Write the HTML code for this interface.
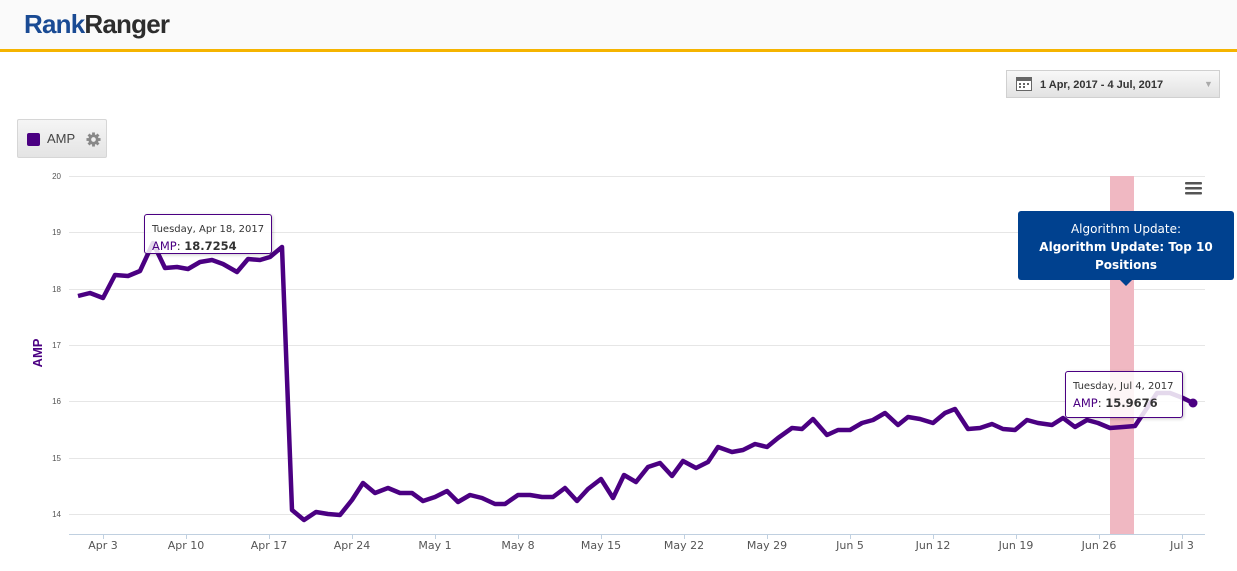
<!DOCTYPE html>
<html><head><meta charset="utf-8"><style>
body{margin:0;width:1237px;height:571px;overflow:hidden;background:#fff;font-family:"Liberation Sans",sans-serif;position:relative}
.hdr{position:absolute;left:0;top:0;width:1237px;height:49px;background:#fafafa;border-bottom:3px solid #f5b400}
.logo{position:absolute;left:24px;top:9px;font-size:26px;font-weight:bold;letter-spacing:-0.8px}
.date{position:absolute;left:1006px;top:70px;width:214px;height:28px;background:linear-gradient(#f8f8f8,#e2e2e2);border:1px solid #d0d0d0;box-sizing:border-box;font-size:11px;font-weight:bold;color:#333}
.amp{position:absolute;left:17px;top:119px;width:90px;height:39px;background:linear-gradient(#f5f5f5,#e4e4e4);border:1px solid #d6d6d6;box-sizing:border-box;border-radius:2px;font-size:13px;color:#444}
.tt{position:absolute;background:#fff;border:1px solid #4b0082;border-radius:3px;box-sizing:border-box;font-family:"DejaVu Sans",sans-serif;color:#333;box-shadow:1px 1px 3px rgba(0,0,0,.2)}
</style></head><body>
<div class="hdr"><div class="logo"><span style="color:#1a4b94">Rank</span><span style="color:#2d2d2d">Ranger</span></div></div>
<div class="date">
<svg style="position:absolute;left:9px;top:6px" width="16" height="14"><rect x="0.5" y="0.5" width="15" height="13" fill="#fff" stroke="#666"/><rect x="0" y="0" width="16" height="4" fill="#666"/><g fill="#666"><rect x="3" y="6" width="2" height="2"/><rect x="7" y="6" width="2" height="2"/><rect x="11" y="6" width="2" height="2"/><rect x="3" y="9" width="2" height="2"/><rect x="7" y="9" width="2" height="2"/></g></svg>
<span style="position:absolute;left:33px;top:8px">1 Apr, 2017 - 4 Jul, 2017</span>
<span style="position:absolute;left:197px;top:8px;color:#aaa;font-size:9px">▼</span></div>
<div class="amp"><div style="position:absolute;left:9px;top:13px;width:13px;height:13px;background:#4b0082;border-radius:2px"></div>
<span style="position:absolute;left:29px;top:11px">AMP</span>
<svg style="position:absolute;left:68px;top:12px" width="15" height="15" viewBox="0 0 16 16"><g fill="#888"><circle cx="8" cy="8" r="5.5"/><g stroke="#888" stroke-width="3"><line x1="8" y1="0.5" x2="8" y2="15.5"/><line x1="0.5" y1="8" x2="15.5" y2="8"/><line x1="2.7" y1="2.7" x2="13.3" y2="13.3"/><line x1="13.3" y1="2.7" x2="2.7" y2="13.3"/></g></g><circle cx="8" cy="8" r="2.5" fill="#eee"/></svg></div>

<svg style="position:absolute;left:0;top:0" width="1237" height="571">
<g stroke="#e6e6e6" stroke-width="1">
<line x1="69" y1="176.5" x2="1205" y2="176.5"/><line x1="69" y1="232.5" x2="1205" y2="232.5"/><line x1="69" y1="289.5" x2="1205" y2="289.5"/><line x1="69" y1="345.5" x2="1205" y2="345.5"/><line x1="69" y1="401.5" x2="1205" y2="401.5"/><line x1="69" y1="458.5" x2="1205" y2="458.5"/><line x1="69" y1="514.5" x2="1205" y2="514.5"/></g>
<rect x="1110" y="176" width="24" height="358" fill="#f0b8c2"/>
<line x1="69" y1="534.5" x2="1205" y2="534.5" stroke="#c0d0e0"/>
<g stroke="#c0d0e0"><line x1="103.5" y1="534" x2="103.5" y2="539"/><line x1="186.5" y1="534" x2="186.5" y2="539"/><line x1="269.5" y1="534" x2="269.5" y2="539"/><line x1="352.5" y1="534" x2="352.5" y2="539"/><line x1="435.5" y1="534" x2="435.5" y2="539"/><line x1="518.5" y1="534" x2="518.5" y2="539"/><line x1="601.5" y1="534" x2="601.5" y2="539"/><line x1="684.5" y1="534" x2="684.5" y2="539"/><line x1="767.5" y1="534" x2="767.5" y2="539"/><line x1="850.5" y1="534" x2="850.5" y2="539"/><line x1="933.5" y1="534" x2="933.5" y2="539"/><line x1="1016.5" y1="534" x2="1016.5" y2="539"/><line x1="1099.5" y1="534" x2="1099.5" y2="539"/><line x1="1182.5" y1="534" x2="1182.5" y2="539"/></g>
<g font-family="Liberation Sans" font-size="8" fill="#555" text-anchor="end">
<text x="61" y="179">20</text><text x="61" y="235">19</text><text x="61" y="292">18</text><text x="61" y="348">17</text><text x="61" y="404">16</text><text x="61" y="461">15</text><text x="61" y="517">14</text></g>
<g font-family="DejaVu Sans" font-size="11" fill="#555" text-anchor="middle">
<text x="103" y="549">Apr 3</text><text x="186" y="549">Apr 10</text><text x="269" y="549">Apr 17</text><text x="352" y="549">Apr 24</text><text x="435" y="549">May 1</text><text x="518" y="549">May 8</text><text x="601" y="549">May 15</text><text x="684" y="549">May 22</text><text x="767" y="549">May 29</text><text x="850" y="549">Jun 5</text><text x="933" y="549">Jun 12</text><text x="1016" y="549">Jun 19</text><text x="1099" y="549">Jun 26</text><text x="1182" y="549">Jul 3</text></g>
<text transform="translate(42,353) rotate(-90)" text-anchor="middle" font-family="Liberation Sans" font-size="13" font-weight="bold" fill="#4b0082">AMP</text>
<polyline fill="none" stroke="#4b0082" stroke-width="4.5" stroke-linejoin="round" points="78,296 90,293 103,298 115,275 128,276 140,271 153,243 165,268 177,267 188,269 200,262 212,260 223,264 237,272 248,259 260,260 270,257 282,247 292,510 304,520 316,512 328,514 340,515 352,500 363,483 375,493 388,488 400,493 412,493 423,501 435,497 447,491 458,502 470,495 482,498 495,504 505,504 518,495 530,495 542,497 553,497 565,488 577,501 588,489 601,479 613,498 624,475 636,482 648,467 660,463 672,476 683,461 696,468 708,462 718,447 732,452 743,450 755,444 767,447 778,438 792,428 802,429 813,419 827,435 838,430 850,430 862,423 873,420 885,413 898,425 908,417 920,419 933,423 945,413 955,409 968,429 980,428 992,424 1003,429 1015,430 1027,420 1038,423 1052,425 1063,418 1075,427 1087,420 1098,423 1110,428 1123,427 1135,426 1157,393 1170,393 1183,398 1193,403"/>
<circle cx="1193" cy="403" r="4.5" fill="#4b0082"/>
<g fill="#555"><rect x="1185" y="182" width="17" height="2.5" rx="1"/><rect x="1185" y="187" width="17" height="2.5" rx="1"/><rect x="1185" y="192" width="17" height="2.5" rx="1"/></g>
<rect x="1018" y="211" width="216" height="69" rx="3" fill="#00418f"/>
<polygon points="1120,280 1132,280 1126,286" fill="#00418f"/>
<g font-family="DejaVu Sans" font-size="12" fill="#fff" text-anchor="middle">
<text x="1126" y="233">Algorithm Update:</text>
<text x="1126" y="251" font-weight="bold">Algorithm Update: Top 10</text>
<text x="1126" y="269" font-weight="bold">Positions</text></g>
</svg>
<div class="tt" style="left:144px;top:214px;width:128px;height:40px;background:rgba(255,255,255,.85)"><div style="position:absolute;left:7px;top:9px;font-size:10px">Tuesday, Apr 18, 2017</div><div style="position:absolute;left:7px;top:24px;font-size:11.5px"><span style="color:#4b0082">AMP</span>: <b>18.7254</b></div></div>
<div class="tt" style="left:1065px;top:371px;width:118px;height:47px;background:rgba(255,255,255,.85)"><div style="position:absolute;left:7px;top:9px;font-size:10px">Tuesday, Jul 4, 2017</div><div style="position:absolute;left:7px;top:24px;font-size:11.5px"><span style="color:#4b0082">AMP</span>: <b>15.9676</b></div></div>
</body></html>
